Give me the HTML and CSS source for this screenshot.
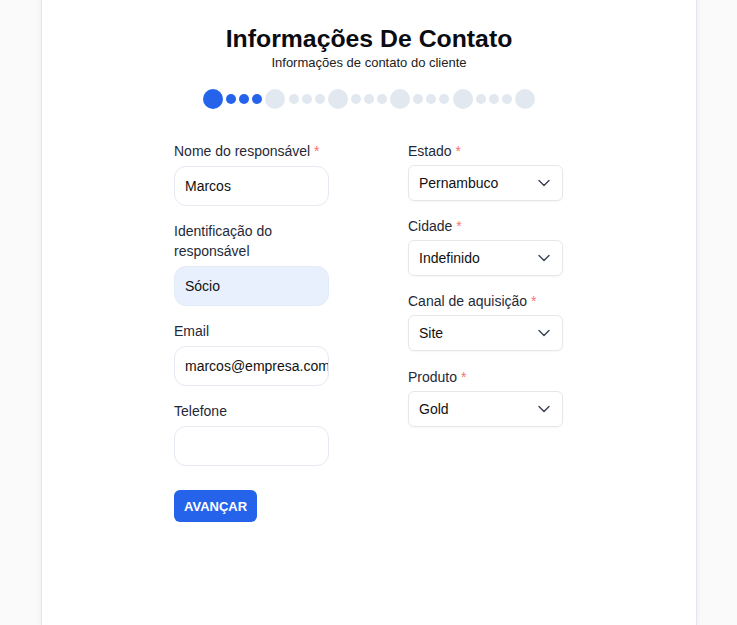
FILE: index.html
```html
<!DOCTYPE html>
<html lang="pt-BR">
<head>
<meta charset="utf-8">
<title>Informações De Contato</title>
<link rel="stylesheet" href="styles.css">
</head>
<body>
<div class="page">
  <main class="card">
    <header class="head">
      <h1 class="title">Informações De Contato</h1>
      <p class="subtitle">Informações de contato do cliente</p>
    </header>
    <div class="steps">
      <span class="dot big on"></span><span class="dot on"></span><span class="dot on"></span><span class="dot on"></span>
      <span class="dot big"></span><span class="dot"></span><span class="dot"></span><span class="dot"></span>
      <span class="dot big"></span><span class="dot"></span><span class="dot"></span><span class="dot"></span>
      <span class="dot big"></span><span class="dot"></span><span class="dot"></span><span class="dot"></span>
      <span class="dot big"></span><span class="dot"></span><span class="dot"></span><span class="dot"></span>
      <span class="dot big"></span>
    </div>
    <form class="form">
      <div class="col left">
        <div class="field">
          <label class="label">Nome do responsável <span class="req">*</span></label>
          <div class="input">Marcos</div>
        </div>
        <div class="field">
          <label class="label">Identificação do responsável</label>
          <div class="input filled">Sócio</div>
        </div>
        <div class="field">
          <label class="label">Email</label>
          <div class="input"><span class="clip">marcos@empresa.com</span></div>
        </div>
        <div class="field">
          <label class="label">Telefone</label>
          <div class="input"></div>
        </div>
        <button type="button" class="btn">AVANÇAR</button>
      </div>
      <div class="col right">
        <div class="sfield">
          <label class="label">Estado <span class="req">*</span></label>
          <div class="select"><span>Pernambuco</span><svg class="chev" viewBox="0 0 12 8"><path d="M1 1.5l5 5 5-5"/></svg></div>
        </div>
        <div class="sfield">
          <label class="label">Cidade <span class="req">*</span></label>
          <div class="select"><span>Indefinido</span><svg class="chev" viewBox="0 0 12 8"><path d="M1 1.5l5 5 5-5"/></svg></div>
        </div>
        <div class="sfield">
          <label class="label">Canal de aquisição <span class="req">*</span></label>
          <div class="select"><span>Site</span><svg class="chev" viewBox="0 0 12 8"><path d="M1 1.5l5 5 5-5"/></svg></div>
        </div>
        <div class="sfield">
          <label class="label">Produto <span class="req">*</span></label>
          <div class="select"><span>Gold</span><svg class="chev" viewBox="0 0 12 8"><path d="M1 1.5l5 5 5-5"/></svg></div>
        </div>
      </div>
    </form>
  </main>
</div>
</body>
</html>
```
FILE: styles.css
```css
* { box-sizing: border-box; }
html, body { margin: 0; padding: 0; }
body {
  background: #fafafa;
  font-family: "Liberation Sans", Arial, sans-serif;
  color: #1f2937;
  height: 625px;
  overflow: hidden;
}
.page {
  display: flex;
  justify-content: center;
  height: 625px;
  overflow: hidden;
}
.card {
  width: 656px;
  margin-left: 1px;
  margin-top: -20px;
  height: 645px;
  background: #fff;
  border: 1px solid #e2e6ee;
  border-bottom: none;
  box-shadow: 0 1px 6px rgba(0,0,0,0.06);
  padding-top: 42px;
  display: flex;
  flex-direction: column;
  align-items: center;
}
.head { text-align: center; }
.title {
  margin: 0;
  font-size: 24.8px;
  line-height: 32px;
  font-weight: 700;
  color: #0b0b12;
}
.subtitle {
  margin: 0;
  font-size: 13px;
  line-height: 16px;
  color: #222;
}
.steps {
  display: flex;
  align-items: center;
  gap: 3.1px;
  margin-top: 18px;
}
.dot {
  width: 10px;
  height: 10px;
  border-radius: 50%;
  background: #e2e8f0;
}
.dot.big { width: 20px; height: 20px; }
.dot.on { background: #2563eb; }
.form {
  display: flex;
  gap: 79px;
  margin-top: 32px;
  margin-left: -1px;
}
.col { width: 155px; display: flex; flex-direction: column; }
.field { display: flex; flex-direction: column; margin-bottom: 15px; }
.label {
  font-size: 14px;
  line-height: 20px;
  color: #1f2937;
}
.req { color: #f87171; }
.input {
  margin-top: 5px;
  height: 40px;
  border: 1px solid #e5e9f2;
  border-radius: 12px;
  padding: 0 0 0 10px;
  font-size: 14px;
  display: flex;
  align-items: center;
  color: #111;
  overflow: hidden;
  white-space: nowrap;
}
.input.filled { background: #e8f0fe; border-color: #e3eaf8; }
.clip { overflow: hidden; }
.btn {
  align-self: flex-start;
  margin-top: 9px;
  height: 32px;
  padding: 0 10px;
  background: #2563eb;
  color: #fff;
  border: none;
  border-radius: 6px;
  font-family: "Liberation Sans", Arial, sans-serif;
  font-weight: 700;
  font-size: 13px;
  letter-spacing: 0;
}
.sfield { display: flex; flex-direction: column; margin-bottom: 15.2px; }
.select {
  margin-top: 4px;
  height: 36px;
  border: 1px solid #e5e7eb;
  border-radius: 6px;
  box-shadow: 0 1px 2px rgba(0,0,0,0.04);
  padding: 0 12px 0 10px;
  display: flex;
  align-items: center;
  justify-content: space-between;
  font-size: 14px;
  color: #111;
}
.chev { width: 12px; height: 8px; }
.chev path { fill: none; stroke: #374151; stroke-width: 1.4; stroke-linecap: round; stroke-linejoin: round; }
```
